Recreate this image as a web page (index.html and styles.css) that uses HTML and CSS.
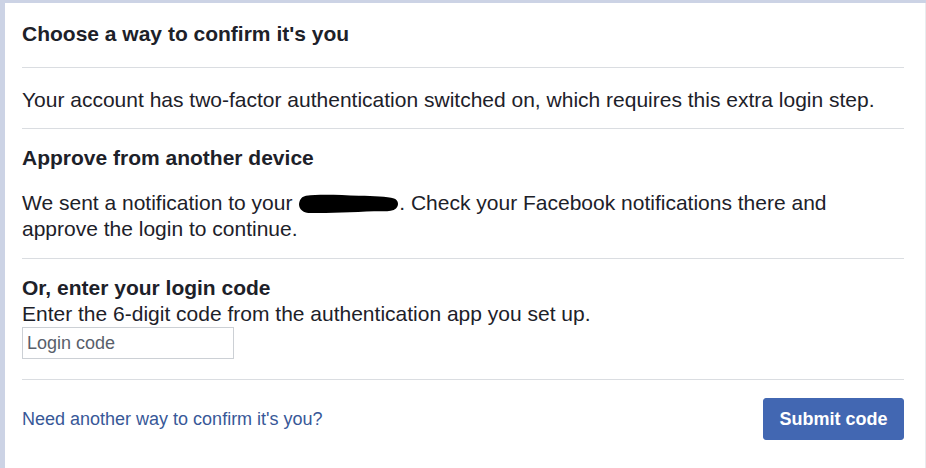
FILE: index.html
```html
<!DOCTYPE html>
<html>
<head>
<meta charset="utf-8">
<link rel="stylesheet" href="styles.css">
</head>
<body>
<div class="page">
  <div class="card">
    <div class="section header">
      <h2 class="title">Choose a way to confirm it's you</h2>
    </div>
    <div class="section intro">
      <p class="text">Your account has two-factor authentication switched on, which requires this extra login step.</p>
    </div>
    <div class="section approve">
      <h3 class="subtitle">Approve from another device</h3>
      <p class="text para">We sent a notification to your <svg class="redact" width="100" height="20" viewBox="0 0 100 22" preserveAspectRatio="none"><path d="M7 2 C20 0 40 1 60 2 C75 2 88 3 95 5 C100 7 100 13 97 16 C93 20 85 19 75 19 C55 20 30 21 12 21 C4 21 0 17 0 11 C1 5 3 3 7 2 Z" fill="#000"/></svg>. Check your Facebook notifications there and approve the login to continue.</p>
    </div>
    <div class="section code">
      <h3 class="subtitle tight">Or, enter your login code</h3>
      <p class="text">Enter the 6-digit code from the authentication app you set up.</p>
      <input class="code-input" type="text" placeholder="Login code">
    </div>
    <div class="footer">
      <a class="link" href="#">Need another way to confirm it's you?</a>
      <button class="btn">Submit code</button>
    </div>
  </div>
</div>
</body>
</html>
```
FILE: styles.css
```css
html, body {
  margin: 0;
  padding: 0;
  background: #ccd3e5;
  font-family: "Liberation Sans", Arial, sans-serif;
  color: #1d2129;
}
.page {
  padding: 3px 0 0 5px;
  height: 465px;
}
.card {
  background: #fff;
  height: 100%;
  padding: 0 21px 0 17px;
  border-right: 1px solid #e9ebee;
}
.section {
  border-bottom: 1px solid #dadde1;
}
.header {
  padding: 19px 0 21px;
}
.title {
  margin: 0;
  font-size: 21px;
  line-height: 24px;
  font-weight: bold;
}
.intro {
  padding: 20px 0 16px;
}
.text {
  margin: 0;
  font-size: 21px;
  line-height: 24px;
}
.approve {
  padding: 17px 0 16px;
}
.subtitle {
  margin: 0;
  font-size: 21px;
  line-height: 24px;
  font-weight: bold;
}
.para {
  margin-top: 20px;
  line-height: 26px;
}
.redact {
  vertical-align: -4px;
  margin-left: 1px;
}
.code {
  padding: 16px 0 20px;
}
.subtitle.tight {
  line-height: 26px;
}
.code .text {
  line-height: 26px;
}
.code-input {
  display: block;
  box-sizing: border-box;
  width: 212px;
  height: 32px;
  margin: 0;
  border: 1px solid #ccd0d5;
  padding: 0 4px;
  font-family: "Liberation Sans", Arial, sans-serif;
  font-size: 18px;
  color: #1d2129;
}
.code-input::placeholder {
  color: #59606b;
}
.footer {
  display: flex;
  justify-content: space-between;
  align-items: center;
  padding-top: 18px;
}
.link {
  color: #385898;
  text-decoration: none;
  font-size: 18px;
}
.btn {
  background: #4267b2;
  border: 1px solid #4267b2;
  border-radius: 3px;
  color: #fff;
  font-family: "Liberation Sans", Arial, sans-serif;
  font-weight: bold;
  font-size: 18px;
  width: 141px;
  height: 42px;
  padding: 0;
}
```
